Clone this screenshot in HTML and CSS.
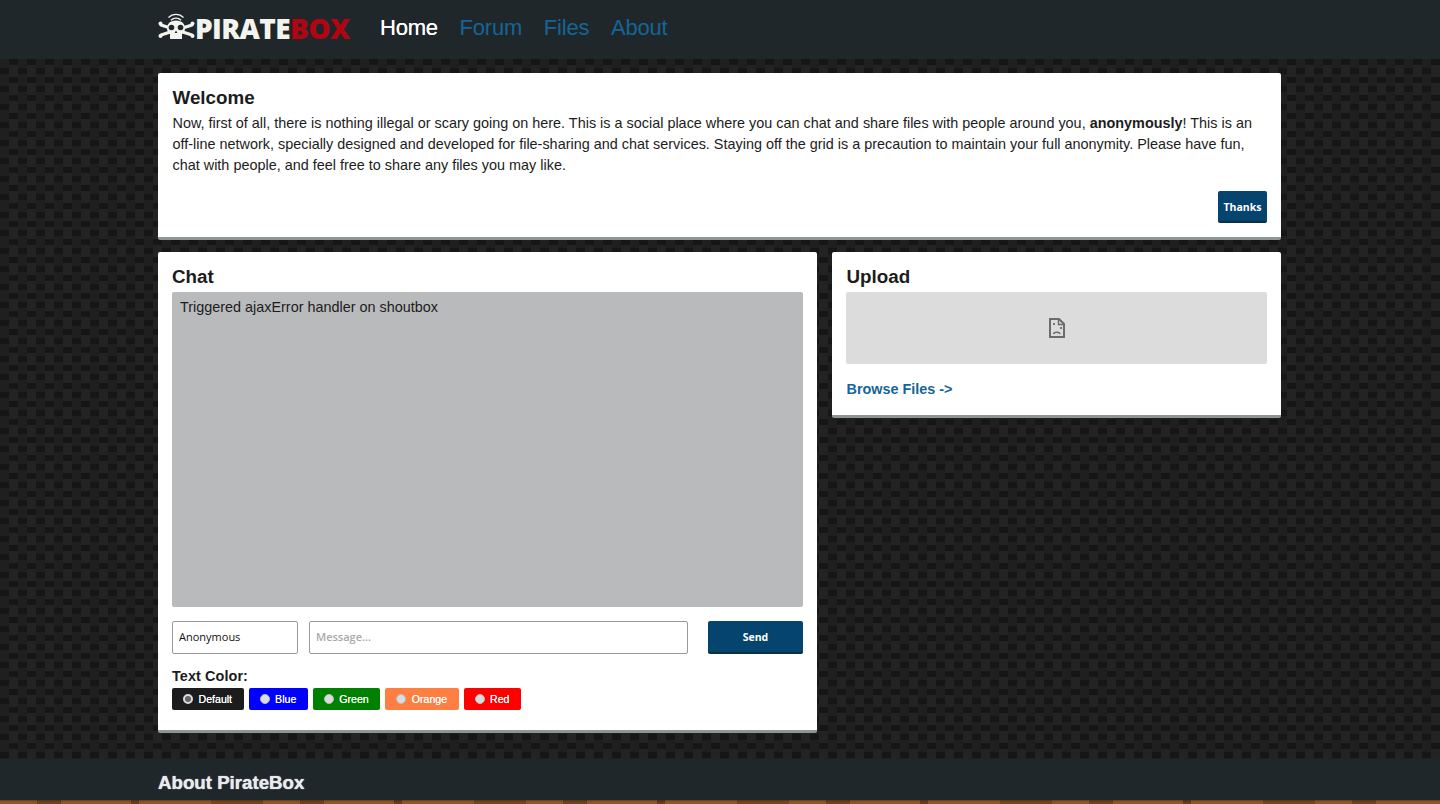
FILE: index.html
```html
<!DOCTYPE html>
<html lang="en">
<head>
<meta charset="utf-8">
<title>PirateBox</title>
<link rel="stylesheet" href="styles.css">
</head>
<body>
<header class="topbar">
  <div class="wrap nav">
    <a class="logo" href="#">
      <svg class="skull" width="37" height="29" viewBox="0 0 37 29" aria-hidden="true">
        <g fill="none" stroke="#f4f4ee" stroke-width="1.300">
          <path d="M10.500 5.500a10.500 10.500 0 0 1 15 0"/>
          <path d="M13 8.300a7 7 0 0 1 10 0"/>
        </g>
        <g stroke="#f4f4ee" stroke-width="3.200" stroke-linecap="round">
          <path d="M3 13l31 10"/>
          <path d="M34 13L3 23"/>
        </g>
        <g fill="#f4f4ee">
          <circle cx="2.500" cy="11.500" r="2"/>
          <circle cx="2.500" cy="24" r="2"/>
          <circle cx="34.500" cy="11.500" r="2"/>
          <circle cx="34.500" cy="24" r="2"/>
          <path d="M18 8.500c6 0 9 3.600 9 7.700 0 2.800-1.300 4.700-3 5.700V27H12v-5.100c-1.700-1-3-2.900-3-5.700 0-4.100 3-7.700 9-7.700z"/>
        </g>
        <circle cx="13.500" cy="15.500" r="2.800" fill="#20272b"/>
        <circle cx="22.500" cy="15.500" r="2.800" fill="#20272b"/>
        <path d="M18 18.500l-1.400 2.500h2.800z" fill="#20272b"/>
      </svg>
      <span class="logo-text">PIRATE<span class="logo-red">BOX</span></span>
    </a>
    <a class="nav-link active" href="#">Home</a>
    <a class="nav-link" href="#">Forum</a>
    <a class="nav-link" href="#">Files</a>
    <a class="nav-link" href="#">About</a>
  </div>
</header>

<main class="wrap content">
  <section class="card welcome">
    <h2>Welcome</h2>
    <p>Now, first of all, there is nothing illegal or scary going on here. This is a social place where you can chat and share files with people around you, <strong>anonymously</strong>! This is an off-line network, specially designed and developed for file-sharing and chat services. Staying off the grid is a precaution to maintain your full anonymity. Please have fun, chat with people, and feel free to share any files you may like.</p>
    <div class="welcome-actions"><button class="btn btn-thanks" type="button">Thanks</button></div>
  </section>

  <div class="columns">
    <section class="card chat">
      <h2>Chat</h2>
      <div class="chat-log">Triggered ajaxError handler on shoutbox</div>
      <form class="chat-form">
        <input class="field field-name" type="text" value="Anonymous">
        <input class="field field-message" type="text" placeholder="Message...">
        <button class="btn btn-send" type="button">Send</button>
      </form>
      <div class="color-label">Text Color:</div>
      <div class="colors">
        <label class="swatch swatch-default"><span class="radio radio-on"></span>Default</label>
        <label class="swatch swatch-blue"><span class="radio"></span>Blue</label>
        <label class="swatch swatch-green"><span class="radio"></span>Green</label>
        <label class="swatch swatch-orange"><span class="radio"></span>Orange</label>
        <label class="swatch swatch-red"><span class="radio"></span>Red</label>
      </div>
    </section>

    <section class="card upload">
      <h2>Upload</h2>
      <div class="dropzone">
        <svg width="16" height="20" viewBox="0 0 16 20" aria-hidden="true">
          <path fill="none" stroke="#6b6b6b" stroke-width="2" d="M1 1h9l5 5v13H1z"/>
          <path fill="none" stroke="#6b6b6b" stroke-width="1.500" d="M9.500 1v5.500H15"/>
          <rect x="4" y="5" width="2" height="2" fill="#777"/>
          <rect x="11" y="9" width="2" height="2" fill="#777"/>
          <path fill="none" stroke="#6b6b6b" stroke-width="1.500" d="M4.500 16c.5-2.500 6-2.500 6.500 0"/>
        </svg>
      </div>
      <a class="browse" href="#">Browse Files -&gt;</a>
    </section>
  </div>
</main>

<footer class="footer">
  <div class="wrap"><h3>About PirateBox</h3></div>
</footer>
<div class="wood"></div>
</body>
</html>
```
FILE: styles.css
```css
* { box-sizing: border-box; }
html, body { margin: 0; padding: 0; }
body {
  height: 804px;
  overflow: hidden;
  display: flex;
  flex-direction: column;
  font-family: "Liberation Sans", Arial, sans-serif;
  color: #1c1c1c;
  background-color: #161616;
  background-image: url("data:image/svg+xml,%3Csvg xmlns='http://www.w3.org/2000/svg' width='18' height='18'%3E%3Crect width='18' height='18' fill='%23161616'/%3E%3Crect x='9' y='6' width='9' height='12' fill='%23232323'/%3E%3Crect x='0' y='15' width='9' height='3' fill='%231f1f1f'/%3E%3Crect x='0' y='0' width='9' height='9' fill='%231f1f1f'/%3E%3C/svg%3E");
  background-size: 18px 18px;
  background-position: 0 5px;
}
.wrap { width: 1123px; margin-left: 158px; }
.topbar { height: 59px; flex: none; background: #20272b; }
.nav { display: flex; align-items: center; height: 55px; }
.logo { display: flex; align-items: center; width: 222px; text-decoration: none; }
.skull { flex: none; margin-top: -3px; }
.logo-text {
  margin-left: 0;
  font-family: "Open Sans", sans-serif;
  font-weight: 800;
  font-size: 28px;
  letter-spacing: -.6px;
  line-height: 1;
  color: #f4f4ee;
}
.logo-red { color: #b10512; }
.nav-link {
  margin-right: 21.700px;
  font-size: 22px;
  letter-spacing: -.2px;
  color: #156596;
  text-decoration: none;
}
.nav-link.active { color: #fff; text-shadow: 0 0 .6px #fff; }
.content { flex: none; padding-top: 14px; }
.card {
  background: #fff;
  border-bottom: 3px solid #8f9494;
  border-radius: 2px;
  padding: 14px 14px 14px 14.500px;
}
.card h2 {
  margin: 0 0 4px;
  font-size: 18.800px;
  line-height: 22px;
  font-weight: 700;
  color: #1c1c1c;
}
.welcome { height: 167px; }
.welcome p {
  margin: 0;
  font-size: 14.400px;
  line-height: 21px;
  letter-spacing: .01px;
}
.welcome-actions { display: flex; justify-content: flex-end; margin-top: 15px; }
.btn {
  border: 0;
  border-bottom: 2px solid #0b3045;
  border-radius: 2px;
  background: #04446f;
  color: #fff;
  font-family: "Open Sans", sans-serif;
  font-weight: 700;
  font-size: 10.500px;
  padding: 0;
}
.btn-thanks { width: 49px; height: 32px; padding-top: 2px; }
.columns { display: flex; align-items: flex-start; gap: 15px; margin-top: 12px; }
.chat { width: 659px; height: 481px; padding-left: 14px; }
.upload { width: 449px; height: 166px; }
.chat-log {
  height: 315px;
  padding: 6px 8px;
  background: #b9babc;
  border-radius: 2px;
  font-size: 14.400px;
  line-height: 18px;
}
.chat-form { display: flex; margin-top: 14px; height: 33px; }
.field {
  height: 33px;
  border: 1px solid #999;
  border-radius: 2px;
  background: #fff;
  padding: 0 6px 2px;
  font-family: "Open Sans", sans-serif;
  font-size: 11px;
  color: #111;
  outline: 0;
}
.field::placeholder { color: #aaa; font-weight: 600; }
.field-name { width: 126px; }
.field-message { width: 379px; margin-left: 11px; }
.btn-send { width: 95px; height: 33px; margin-left: 20px; }
.color-label { margin-top: 13px; font-size: 14.400px; line-height: 18px; font-weight: 700; letter-spacing: .1px; }
.colors { display: flex; gap: 5px; margin-top: 3px; }
.swatch {
  display: flex;
  align-items: center;
  height: 22px;
  padding: 0 11.500px 0 11px;
  border-radius: 2px;
  color: #fff;
  font-size: 10.600px;
  text-shadow: 0 0 .5px #fff;
}
.swatch-default { background: #1c1c1e; }
.swatch-blue { background: #0000ff; }
.swatch-green { background: #008000; }
.swatch-orange { background: #ff7f42; }
.swatch-red { background: #ff0000; }
.radio {
  width: 10px;
  height: 10px;
  margin-right: 5.500px;
  border-radius: 50%;
  background: #dcdcdc;
  border: 1px solid #bbb;
}
.radio-on { background: #666; border: 2.500px solid #ddd; }
.dropzone {
  display: flex;
  align-items: center;
  justify-content: center;
  height: 72px;
  margin-left: -.5px;
  background: #dcdcdc;
  border-radius: 2px;
}
.browse {
  display: block;
  margin-top: 16px;
  font-size: 14.400px;
  line-height: 18px;
  font-weight: 700;
  color: #156596;
  text-decoration: none;
}
.footer { margin-top: 26px; height: 41px; flex: none; background: #20272b; }
.footer h3 {
  margin: 0;
  padding-top: 12px;
  font-size: 18.700px;
  line-height: 24px;
  font-weight: 700;
  color: #e8ebee;
  text-shadow: 0 0 1px #fff;
}
.wood {
  flex: 1;
  background:
    linear-gradient(180deg, rgba(30, 10, 0, .35), transparent 2px),
    repeating-linear-gradient(90deg, transparent 0 37px, rgba(40, 15, 0, .3) 37px 61px, transparent 61px 131px, rgba(30, 10, 0, .35) 131px 139px, transparent 139px 211px, rgba(40, 15, 0, .25) 211px 263px),
    #8c5727;
}
```
